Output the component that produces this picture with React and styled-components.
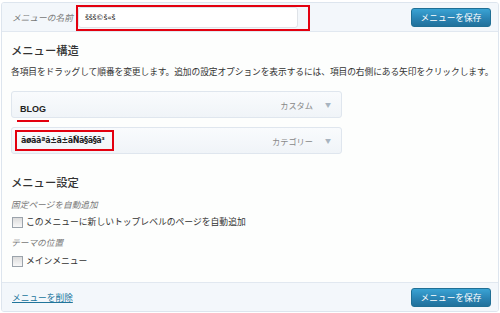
import React from "react";
import styled, { createGlobalStyle } from "styled-components";

const Global = createGlobalStyle`
  body {
    margin: 0;
    background: #ffffff;
    font-family: "Noto Sans CJK JP", "Liberation Sans", sans-serif;
    color: #333;
  }
`;

const Panel = styled.div`
  margin: 2px 1px 0 1px;
  width: 496px;
  height: 308px;
  border: 1px solid #dde5ee;
  border-radius: 3px;
  background: #fdfefd;
  display: flex;
  flex-direction: column;
  overflow: hidden;
`;

const Bar = styled.div`
  height: 28px;
  flex: none;
  display: flex;
  align-items: center;
  padding: 0 7px 0 10px;
  background: #f3f7fb;
  border-${(p) => (p.$bottom ? "top" : "bottom")}: 1px solid #e1e8f0;
  margin-top: ${(p) => (p.$bottom ? "auto" : "0")};
`;

const NameLabel = styled.span`
  font-size: 8.7px;
  font-style: italic;
  color: #777;
  width: 66px;
`;

const Marked = styled.div`
  position: relative;
  display: inline-block;
`;

const RedBox = styled.span`
  position: absolute;
  left: ${(p) => p.$l}px;
  right: ${(p) => p.$r}px;
  top: ${(p) => p.$t}px;
  bottom: ${(p) => p.$b}px;
  border: 2px solid #e3000f;
  pointer-events: none;
`;

const RedLine = styled.span`
  position: absolute;
  left: -3px;
  right: -3px;
  bottom: -5px;
  height: 2px;
  background: #e3000f;
`;

const NameInput = styled.div`
  width: 220px;
  height: 21px;
  border: 1px solid #dfe3e8;
  border-radius: 3px;
  background: #fff;
  display: flex;
  align-items: center;
  padding-left: 6px;
  box-sizing: border-box;
  font-family: "DejaVu Sans", sans-serif;
  font-size: 7.5px;
  color: #222;
  letter-spacing: -0.2px;
`;

const SaveButton = styled.button`
  margin-left: auto;
  width: 80px;
  height: 19px;
  border: 1px solid #1f6f95;
  border-radius: 3px;
  background: linear-gradient(#3aa3d4, #2a84b4 55%, #21719b);
  color: #fff;
  font-family: "Noto Sans CJK JP", sans-serif;
  font-size: 8.7px;
  padding: 0;
  line-height: 17px;
`;

const Body = styled.div`
  padding: 0 9px;
  display: flex;
  flex-direction: column;
`;

const Heading = styled.div`
  font-size: 11.3px;
  font-weight: 500;
  color: #333;
  line-height: 14px;
  margin-top: ${(p) => p.$mt}px;
`;

const Desc = styled.div`
  font-size: 8.75px;
  line-height: 12px;
  margin-top: 9px;
  white-space: nowrap;
  letter-spacing: -0.1px;
`;

const Item = styled.div`
  width: 331px;
  height: 27px;
  box-sizing: border-box;
  border: 1px solid #dfe6ee;
  border-radius: 3px;
  background: linear-gradient(#f9fbfd, #f0f4f8);
  display: flex;
  align-items: center;
  padding: 0 10px 0 8px;
  margin-top: ${(p) => p.$mt}px;
`;

const ItemTitle = styled.span`
  font-family: "Liberation Sans", sans-serif;
  font-weight: bold;
  font-size: 9px;
  color: #222;
`;

const Garbled = styled.span`
  display: inline-flex;
  align-items: center;
  box-sizing: border-box;
  width: 99px;
  height: 21px;
  margin-left: -5px;
  padding-left: 4px;
  border: 2px solid #e3000f;
  font-family: "DejaVu Sans", sans-serif;
  font-weight: bold;
  font-size: 8px;
  color: #222;
  letter-spacing: -0.4px;
  white-space: nowrap;
  overflow: hidden;
`;

const ItemType = styled.span`
  margin-left: auto;
  font-size: 8.2px;
  color: #888;
`;

const Arrow = styled.span`
  font-size: 6px;
  color: #a8b4c0;
  margin-left: 12px;
`;

const SubLabel = styled.div`
  font-size: 8.7px;
  font-style: italic;
  color: #777;
  line-height: 12px;
  margin-top: ${(p) => p.$mt}px;
`;

const CheckRow = styled.label`
  display: flex;
  align-items: center;
  gap: 3px;
  font-size: 8.8px;
  line-height: 12px;
  color: #333;
  margin-top: ${(p) => p.$mt}px;
`;

const Box = styled.span`
  width: 9px;
  height: 9px;
  border: 1px solid #9ba3ab;
  background: linear-gradient(#dcdcdc, #f8f8f8);
  margin-left: 1px;
`;

const DeleteLink = styled.a`
  font-size: 8.7px;
  color: #21759b;
  text-decoration: underline;
`;

export default function App() {
  return (
    <>
      <Global />
      <Panel>
        <Bar>
          <NameLabel>メニューの名前</NameLabel>
          <Marked>
            <NameInput>ššš©š«š</NameInput>
            <RedBox $l={-2} $r={-12} $t={-2} $b={-3} />
          </Marked>
          <SaveButton>メニューを保存</SaveButton>
        </Bar>
        <Body>
          <Heading $mt={11}>メニュー構造</Heading>
          <Desc>
            各項目をドラッグして順番を変更します。追加の設定オプションを表示するには、項目の右側にある矢印をクリックします。
          </Desc>
          <Item $mt={13}>
            <Marked>
              <ItemTitle>BLOG</ItemTitle>
              <RedLine />
            </Marked>
            <ItemType>カスタム</ItemType>
            <Arrow>▼</Arrow>
          </Item>
          <Item $mt={9}>
            <Garbled>ãøããªã±ã±ãÑã§ã§ã³</Garbled>
            <ItemType>カテゴリー</ItemType>
            <Arrow>▼</Arrow>
          </Item>
          <Heading $mt={21}>メニュー設定</Heading>
          <SubLabel $mt={10}>固定ページを自動追加</SubLabel>
          <CheckRow $mt={5}>
            <Box />
            このメニューに新しいトップレベルのページを自動追加
          </CheckRow>
          <SubLabel $mt={9}>テーマの位置</SubLabel>
          <CheckRow $mt={6}>
            <Box />
            メインメニュー
          </CheckRow>
        </Body>
        <Bar $bottom>
          <DeleteLink href="#">メニューを削除</DeleteLink>
          <SaveButton>メニューを保存</SaveButton>
        </Bar>
      </Panel>
    </>
  );
}
